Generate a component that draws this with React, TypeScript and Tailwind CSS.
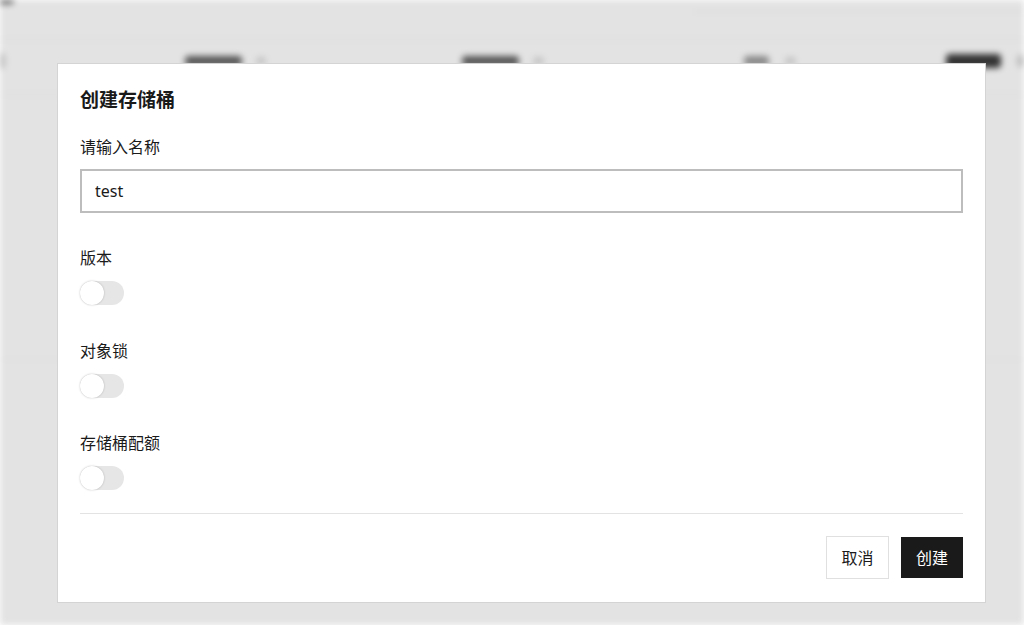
import React, { useState } from 'react';

const font = { fontFamily: '"Noto Sans", "Noto Sans CJK SC", sans-serif' };

const Toggle = ({ on, onClick }: { on: boolean; onClick: () => void }) => (
  <button
    type="button"
    onClick={onClick}
    className={`relative h-[24px] w-[44px] rounded-full ${on ? 'bg-[#1a1a1a]' : 'bg-[#e6e6e6]'}`}
  >
    <span
      className={`absolute top-0 h-[24px] w-[24px] rounded-full bg-white shadow-[0_0_2px_rgba(0,0,0,0.25)] ${on ? 'left-[20px]' : 'left-0'}`}
    />
  </button>
);

const Backdrop = () => (
  <div className="h-[625px] w-full overflow-hidden bg-[#e3e3e3] blur-[3px]">
    <div className="flex h-[40px] items-start justify-between border-b border-[#d6d6d6]">
      <div className="ml-[-6px] mt-[-6px] h-[10px] w-[20px] rounded bg-[#555]" />
      <div className="mr-0 mt-[2px] h-[10px] w-[330px] border-b border-[#d2d2d2]" />
    </div>
    <div className="flex h-[55px] items-center border-b border-[#d6d6d6] pb-[12px]">
      <div className="ml-[-4px] h-[16px] w-[10px] rounded-full bg-[#bbb]" />
      <div className="ml-[180px] h-[10px] w-[62px] rounded bg-[#555]" />
      <div className="ml-[14px] h-[8px] w-[12px] rounded bg-[#c4c4c4]" />
      <div className="ml-[196px] h-[10px] w-[62px] rounded bg-[#555]" />
      <div className="ml-[14px] h-[8px] w-[12px] rounded bg-[#c4c4c4]" />
      <div className="ml-[200px] h-[10px] w-[28px] rounded bg-[#888]" />
      <div className="ml-[16px] h-[8px] w-[12px] rounded bg-[#c4c4c4]" />
      <div className="ml-[150px] h-[14px] w-[60px] rounded bg-[#333]" />
      <div className="ml-[16px] h-[12px] w-[8px] rounded bg-[#bbb]" />
    </div>
    <div className="h-[265px] border-b border-[#dadada]" />
  </div>
);

export default function App() {
  const [name, setName] = useState('test');
  const [version, setVersion] = useState(false);
  const [lock, setLock] = useState(false);
  const [quota, setQuota] = useState(false);

  return (
    <div className="relative h-[625px] w-[1024px] overflow-hidden" style={font}>
      <Backdrop />
      <div className="absolute inset-0 pl-[57px] pt-[63px]">
        <div className="w-[929px] border border-[#d4d4d4] bg-white px-[22px] pb-[23px] pt-[24px] text-[#1a1a1a]">
          <h2 className="text-[19px] font-semibold leading-[24px]">创建存储桶</h2>

          <label className="mt-[25px] block text-[16px] leading-[20px]">请输入名称</label>
          <input
            value={name}
            onChange={(e) => setName(e.target.value)}
            className="mt-[12px] block h-[44px] w-full border-2 border-[#bdbdbd] px-[13px] text-[16px] outline-none"
          />

          <div className="mt-[35px] text-[16px] leading-[20px]">版本</div>
          <div className="mt-[13px] flex">
            <Toggle on={version} onClick={() => setVersion(!version)} />
          </div>

          <div className="mt-[36px] text-[16px] leading-[20px]">对象锁</div>
          <div className="mt-[13px] flex">
            <Toggle on={lock} onClick={() => setLock(!lock)} />
          </div>

          <div className="mt-[35px] text-[16px] leading-[20px]">存储桶配额</div>
          <div className="mt-[13px] flex">
            <Toggle on={quota} onClick={() => setQuota(!quota)} />
          </div>

          <div className="mt-[23px] border-t border-[#e3e3e3]" />

          <div className="mt-[22px] flex items-center justify-end gap-[12px]">
            <button className="h-[43px] w-[63px] border border-[#e0e0e0] bg-white text-[16px]">取消</button>
            <button className="h-[41px] w-[62px] bg-[#1a1a1a] text-[16px] text-white">创建</button>
          </div>
        </div>
      </div>
    </div>
  );
}
